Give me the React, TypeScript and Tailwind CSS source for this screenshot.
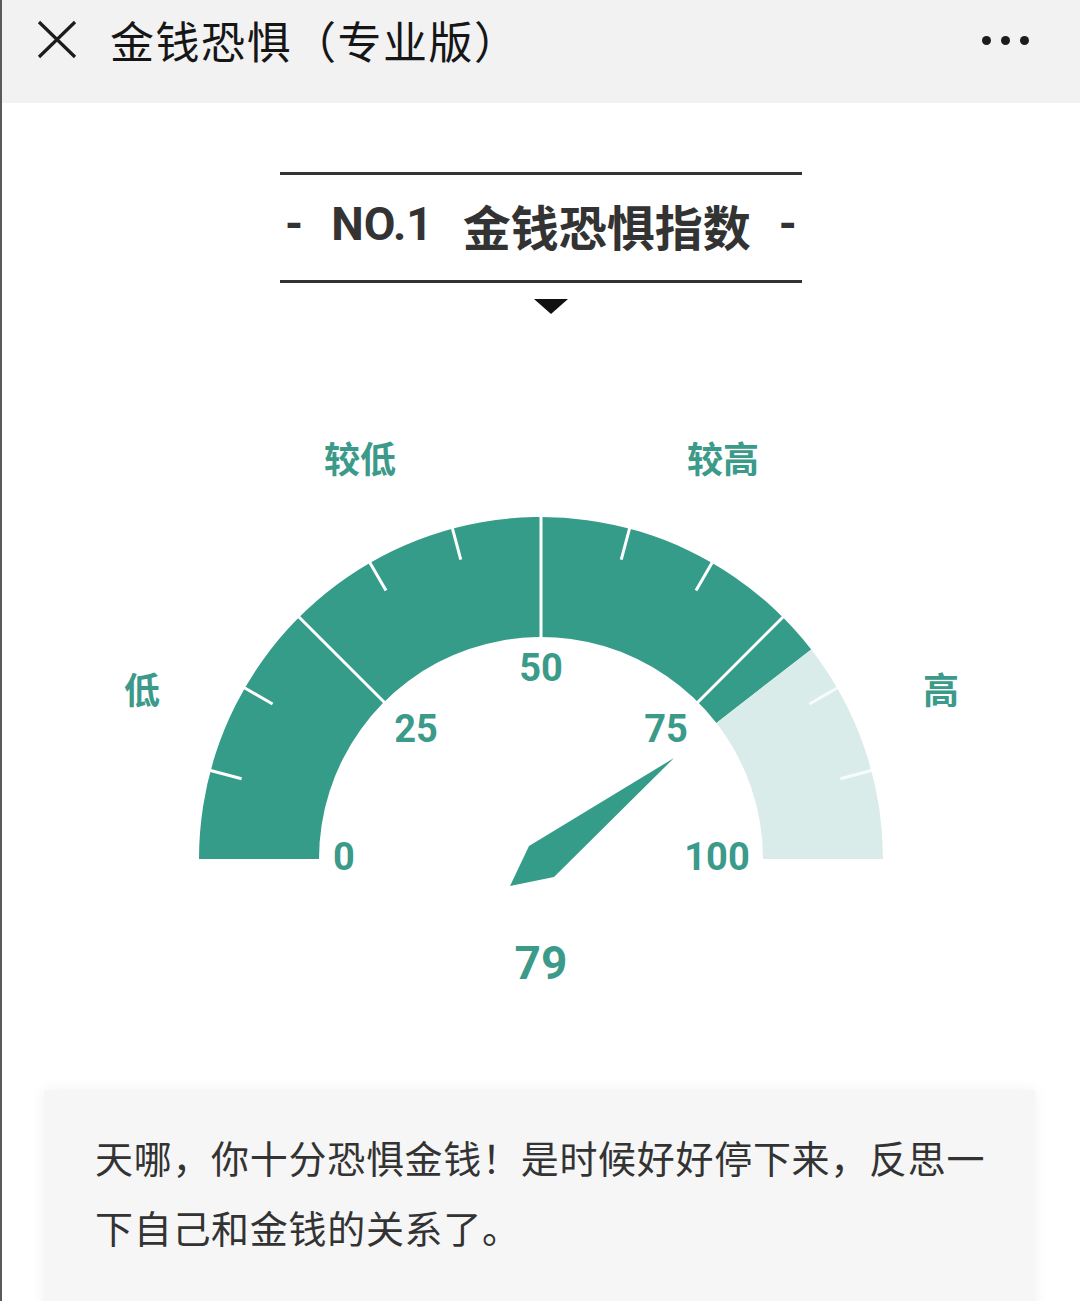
import type { FC } from "react";

const CX = 540;
const CY = 859;
const R = 342;
const RI = 222;
const VALUE = 79;

const pt = (deg: number, rad: number) => {
  const a = (deg * Math.PI) / 180;
  return [CX + rad * Math.cos(a), CY - rad * Math.sin(a)];
};

// band segment between two angles (degrees, 180 = left, 0 = right)
const band = (from: number, to: number) => {
  const [x1, y1] = pt(from, R);
  const [x2, y2] = pt(to, R);
  const [x3, y3] = pt(to, RI);
  const [x4, y4] = pt(from, RI);
  return `M${x1} ${y1} A${R} ${R} 0 0 1 ${x2} ${y2} L${x3} ${y3} A${RI} ${RI} 0 0 0 ${x4} ${y4} Z`;
};

const valueAngle = 180 - VALUE * 1.8;

const Gauge: FC = () => {
  const major = [135, 90, 45];
  const minor = [165, 150, 120, 105, 75, 60, 30, 15];

  return (
    <svg width="1080" height="686" viewBox="0 314 1080 686" className="block">
      <path d={band(180, valueAngle)} fill="#369c8a" />
      <path d={band(valueAngle, 0)} fill="#d9ecea" />

      {major.map((d) => {
        const [x1, y1] = pt(d, RI - 1);
        const [x2, y2] = pt(d, R + 1);
        return <line key={d} x1={x1} y1={y1} x2={x2} y2={y2} stroke="#fff" strokeWidth={3} />;
      })}
      {minor.map((d) => {
        const [x1, y1] = pt(d, R - 32);
        const [x2, y2] = pt(d, R + 1);
        return (
          <line
            key={d}
            x1={x1}
            y1={y1}
            x2={x2}
            y2={y2}
            stroke="#fff"
            strokeOpacity={d < valueAngle ? 0.8 : 1}
            strokeWidth={3}
          />
        );
      })}

      <polygon points="673,758 528,846 509,886 553,877" fill="#369c8a" />

      <g className="fill-[#3b9a89] font-['Noto_Sans_CJK_SC',sans-serif] font-bold text-[36px]" textAnchor="middle" dominantBaseline="central">
        <text x="141" y="688">低</text>
        <text x="359" y="457">较低</text>
        <text x="722" y="457">较高</text>
        <text x="940" y="688">高</text>
      </g>

      <g className="fill-[#3b9a89] font-['Roboto',sans-serif] font-bold text-[38px]" textAnchor="middle" dominantBaseline="central">
        <text x="343" y="857">0</text>
        <text x="415" y="729">25</text>
        <text x="540" y="668">50</text>
        <text x="665" y="729">75</text>
        <text x="716" y="857">100</text>
        <text x="540" y="963" className="text-[46px]">{VALUE}</text>
      </g>
    </svg>
  );
};

const App: FC = () => {
  return (
    <div className="min-h-[1301px] w-[1080px] overflow-hidden border-l-2 border-[#5a5a5a] bg-white font-['Noto_Sans_CJK_SC','Noto_Sans',sans-serif]">
      <header className="h-[103px] bg-[#f2f2f2]">
        <div className="flex h-[80px] items-center pl-[35px] pr-[51px]">
          <svg width="40" height="40" viewBox="0 0 40 40" className="shrink-0">
            <path d="M2 2 L38 37 M38 2 L2 37" stroke="#1c1c1c" strokeWidth={3.2} fill="none" />
          </svg>
          <h1 className="ml-[33px] text-[44px] leading-none tracking-[1.5px] text-[#161616]">金钱恐惧（专业版）</h1>
          <div className="ml-auto flex gap-[10px]">
            <span className="h-[9px] w-[9px] rounded-full bg-[#1c1c1c]" />
            <span className="h-[9px] w-[9px] rounded-full bg-[#1c1c1c]" />
            <span className="h-[9px] w-[9px] rounded-full bg-[#1c1c1c]" />
          </div>
        </div>
      </header>

      <main className="flex flex-col items-center">
        <div className="mt-[69px] flex h-[111px] w-[522px] items-center justify-between border-y-[3px] border-[#333] px-[5px] pb-[6px] text-[#333]">
          <span className="font-['Roboto',sans-serif] text-[46px] font-bold">-</span>
          <div className="flex items-center">
            <span className="font-['Roboto',sans-serif] text-[46px] font-bold">NO.1</span>
            <span className="ml-[30px] text-[48px] font-bold leading-none">金钱恐惧指数</span>
          </div>
          <span className="font-['Roboto',sans-serif] text-[46px] font-bold">-</span>
        </div>

        <svg width="34" height="15" viewBox="0 0 34 15" className="ml-[20px] mt-[16px] block">
          <polygon points="0,0 34,0 17,15" fill="#111" />
        </svg>

        <Gauge />

        <section className="mt-[90px] w-[991px] self-start ml-[42px] bg-[#f6f6f6] pb-[80px] pl-[51px] pr-[30px] pt-[32px] shadow-[0_0_14px_rgba(0,0,0,0.06)]">
          <p className="text-[38px] leading-[70px] tracking-[0.7px] text-[#333]">
            天哪，你十分恐惧金钱！是时候好好停下来，反思一下自己和金钱的关系了。
          </p>
        </section>
      </main>
    </div>
  );
};

export default App;
